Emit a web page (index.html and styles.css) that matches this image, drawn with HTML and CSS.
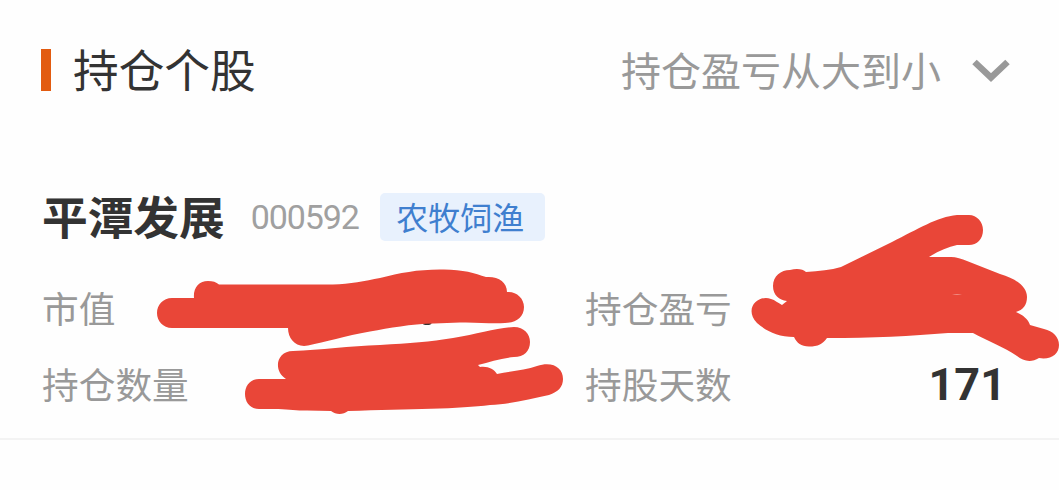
FILE: index.html
```html
<!DOCTYPE html>
<html lang="zh-CN">
<head>
<meta charset="utf-8">
<title>持仓个股</title>
<link rel="stylesheet" href="styles.css">
</head>
<body>
<main class="page">
  <header class="header">
    <h1 class="title"><span>持仓个股</span></h1>
    <div class="sort">
      <span>持仓盈亏从大到小</span>
      <svg class="chevron" width="40" height="28" viewBox="0 0 40 28"><path d="M3.500 6 20 21.500 36.500 6" fill="none" stroke="#999" stroke-width="6.500"/></svg>
    </div>
  </header>
  <section class="stock">
    <div class="stock-head">
      <h2 class="name">平潭发展</h2>
      <span class="code">000592</span>
      <span class="tag">农牧饲渔</span>
    </div>
    <div class="stats">
      <div class="stat"><span>市值</span></div>
      <div class="stat"><span>持仓盈亏</span></div>
      <div class="stat"><span>持仓数量</span></div>
      <div class="stat"><span>持股天数</span><b class="value">171</b></div>
    </div>
  </section>
  <svg class="scribbles" width="1059" height="490" viewBox="0 0 1059 490">
    <ellipse cx="427" cy="323" rx="4.500" ry="2" fill="#333"/>
    <g fill="#e94638">
      <path d="M172 298H194C193 288 199 281 208 281C213 281 216 282 219 284.500H333C350 284 365 281 380 278C400 273 417 269.500 440 269.500C462 269 474 273 486 277C498 276 507 282 507 292C516 291 524 298 524 307C524 317 516 323 505 323C490 324 478 322 460 322.500L434 323.500C410 324 390 328 370 331.500C345 336 325 342 308 345.500C296 348 288 339 288 328H172C163 328 157 321 157 313C157 305 163 298 172 298Z"/>
      <path d="M293 351C320 350 350 346 380 345C410 343 430 342 453 338C478 334 497 328 514 327C524 327 530 334 530 342C530 351 524 357 514 357C501 358 490 362 478 365L480 367C488 366 494 369 497 374C511 371 526 370 537 366C553 361 563 368 563 379C563 387 558 392 549 395C529 399 511 404 490 405C460 409 410 409 348 411C343 415 336 415 331 411L307 410.500C295 411 288 409 274 409H259C250 409 245 402 245 394C245 386 250 379 259 379H286C273 371 276 351 293 351Z"/>
      <path d="M806 272C819 271 831 270 841 267L892 242C918 229 937 217 957 215H969C977 215 983 222 983 230C983 239 977 245 969 245H957C948 247 938 251 929 257H951C956 257 962 259 967 261L1000 274C1017 279 1027 287 1027 297C1027 305 1023 310 1016 312C1023 315 1028 319 1030 325L1044 329C1053 331 1059 337 1059 345C1059 354 1051 360 1039 358C1031 363 1023 361 1017 356C1004 347 988 341 973 333H948C912 336 872 338 827 338C823 344 818 346.500 809 346.500C801 346.500 797 343 794 337C778 337 766 331 757 323C743 308 759 294 771 299C775 300 778 303 782 305L787 301C779 300 773 295 773 286C773 276 781 270 790 270C797 268 803 269 806 272Z"/>
    </g>
    <path d="M952 295Q957 293.500 962 295Z" fill="#f3a49b"/>
  </svg>
</main>
</body>
</html>
```

FILE: styles.css
```css
* { box-sizing: border-box; }
body {
  margin: 0;
  background: #fefefe;
  color: #333;
  font-family: "Noto Sans CJK SC", sans-serif;
}
h1, h2 { margin: 0; }
.page {
  position: relative;
  width: 1059px;
  height: 490px;
  overflow: hidden;
}
.header {
  display: flex;
  justify-content: space-between;
  align-items: center;
  height: 140px;
  padding: 0 48px 0 41px;
}
.title {
  display: flex;
  align-items: center;
  gap: 22px;
  font-size: 45.7px;
  font-weight: 400;
  line-height: 60px;
}
.title span { padding-bottom: 4px; }
.title::before {
  content: "";
  width: 10px;
  height: 42px;
  background: #e25b10;
}
.sort {
  display: flex;
  align-items: center;
  gap: 30px;
  font-size: 40px;
  line-height: 60px;
  color: #999;
}
.sort span { padding-bottom: 2px; }
.chevron { display: block; }
.stock {
  height: 300px;
  padding: 47px 53px 0 42px;
  border-bottom: 2px solid #f3f3f3;
}
.stock-head {
  display: flex;
  align-items: center;
  height: 60px;
}
.name {
  padding-bottom: 4px;
  font-size: 45.7px;
  font-weight: 700;
  line-height: 60px;
}
.code {
  margin-left: 26px;
  font-family: Roboto, sans-serif;
  font-size: 34px;
  letter-spacing: -1.1px;
  color: #a0a0a0;
}
.tag {
  margin-left: 21px;
  width: 165px;
  height: 48px;
  padding-right: 4px;
  border-radius: 5px;
  background: #e8f1fd;
  color: #3f7fcf;
  font-size: 32px;
  line-height: 46px;
  text-align: center;
}
.stats {
  display: grid;
  grid-template-columns: 543px 1fr;
  grid-auto-rows: 76px;
  margin-top: 22px;
}
.stat {
  display: flex;
  justify-content: space-between;
  align-items: center;
  font-size: 36.7px;
  line-height: 50px;
  color: #999;
}
.value {
  padding-top: 4px;
  font-family: Roboto, sans-serif;
  font-size: 45px;
  color: #333;
}
.scribbles {
  position: absolute;
  inset: 0;
}
```
